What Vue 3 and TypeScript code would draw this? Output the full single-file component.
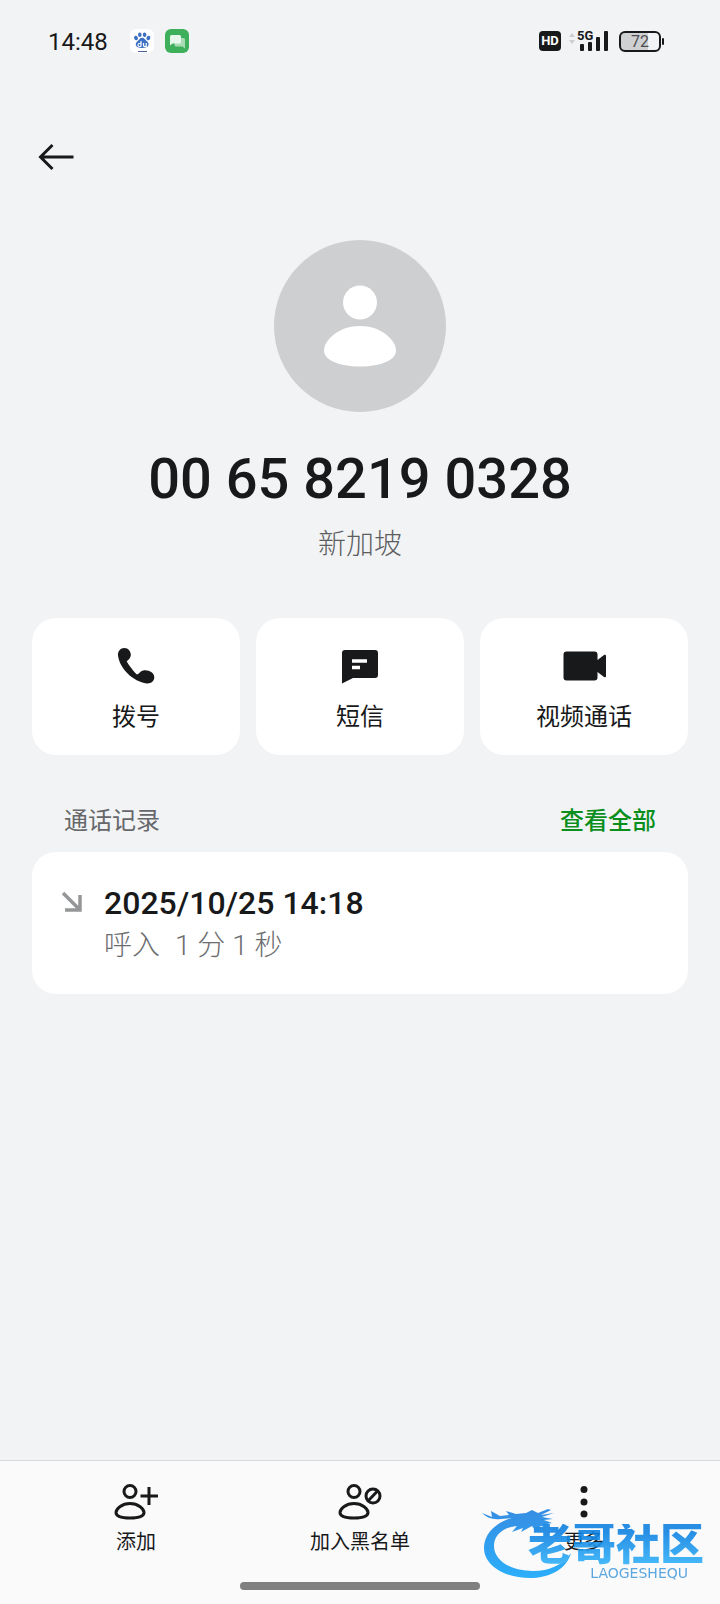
<script setup lang="ts">
interface CallEntry {
  time: string
  kind: string
  duration: string
}

const phone = '00 65 8219 0328'
const region = '新加坡'
const calls: CallEntry[] = [
  { time: '2025/10/25 14:18', kind: '呼入', duration: '1 分 1 秒' },
]
</script>

<template>
  <div class="page">
    <header class="status">
      <span class="clock">14:48</span>
      <span class="apps">
        <svg width="24" height="24" viewBox="0 0 24 24" aria-hidden="true">
          <rect width="24" height="24" rx="6" fill="#fff" />
          <g fill="#3c70c4">
            <ellipse cx="6" cy="9" rx="1.9" ry="2.3" transform="rotate(-18 6 9)" />
            <ellipse cx="9.800" cy="5.800" rx="1.800" ry="2.300" />
            <ellipse cx="14.600" cy="5.800" rx="1.800" ry="2.300" />
            <ellipse cx="18.400" cy="9" rx="1.900" ry="2.300" transform="rotate(18 18.400 9)" />
            <path d="M12.2 8.800c2.200 0 3 2 4.400 3.200 1.800 1.400 2.400 2.800 1.800 4.600-.6 1.800-2.400 2.300-6.200 2.300s-5.600-.5-6.200-2.300c-.6-1.800 0-3.200 1.800-4.600 1.400-1.200 2.200-3.200 4.400-3.200Z" />
            <rect x="8" y="22" width="9" height="1" fill="#4c6193" />
          </g>
          <g fill="none" stroke="#fff" stroke-width="1.200">
            <path d="M11 12v5.500M11 14.500H9.500a1.500 1.500 0 0 0 0 3H11M13.500 14v2.200c0 1 .5 1.400 1.400 1.400h1.300V14" />
          </g>
        </svg>
        <svg width="24" height="24" viewBox="0 0 24 24" aria-hidden="true">
          <rect width="24" height="24" rx="6" fill="#3eaf5a" />
          <path d="M11 9h7.500A1.500 1.500 0 0 1 20 10.500v9L17.500 17.500H11A1.500 1.500 0 0 1 9.500 16v-5.500A1.500 1.500 0 0 1 11 9Z" fill="#a9dcb4" />
          <path d="M6.500 6h8A1.500 1.500 0 0 1 16 7.500v5.500a1.500 1.500 0 0 1-1.500 1.500H7.500L5 16.500v-9A1.500 1.500 0 0 1 6.500 6Z" fill="#e8f7eb" />
        </svg>
      </span>
      <span class="signals">
        <span class="hd">HD</span>
        <svg width="42" height="24" viewBox="0 0 42 24" aria-label="5G">
          <path d="M1 8l3-4 3 4ZM1 11l3 4 3-4Z" fill="#cccdcf" />
          <g fill="#18191a">
            <rect x="12" y="15" width="4" height="7" rx="1" />
            <rect x="20" y="13" width="4" height="9" rx="1" />
            <rect x="28" y="8" width="4" height="14" rx="1" />
            <rect x="36" y="2" width="4" height="20" rx="1" />
            <text x="9" y="11" class="gen">5G</text>
          </g>
        </svg>
        <span class="battery">72</span>
      </span>
    </header>

    <nav class="topbar">
      <button type="button" class="back" aria-label="返回">
        <svg width="40" height="32" viewBox="0 0 40 32">
          <path d="M16.500 4 4.500 16 16.500 28M4.500 16H37.500" fill="none" stroke="#18191a" stroke-width="3" />
        </svg>
      </button>
    </nav>

    <main>
      <section class="profile">
        <div class="avatar">
          <svg width="172" height="172" viewBox="0 0 172 172" aria-hidden="true">
            <circle cx="86" cy="62.500" r="17" fill="#fff" />
            <path d="M86 86c21 0 36 14 36 24.500 0 9.500-15 16-36 16s-36-6.500-36-16C50 100 65 86 86 86Z" fill="#fff" />
          </svg>
        </div>
        <h1>{{ phone }}</h1>
        <p>{{ region }}</p>
      </section>

      <section class="actions">
        <button type="button" class="card">
          <svg width="44" height="44" viewBox="0 0 44 44" aria-hidden="true">
            <path d="M4 11.500C3.500 7.500 6.500 4 10.300 4c3.900 0 6.900 3.500 6.500 7.600-.3 2.600-2.600 4.600-4 5.600-.5.500 8.700 12.800 10.200 13.100 2 .2 2.900-3.500 6.400-3.900 5.600-.8 10.900 2.300 10.900 6.900 0 3.900-3.200 6.500-7.500 6.200C19 37.500 5.800 25 4 11.500Z" fill="#18191a" />
          </svg>
          <span>拨号</span>
        </button>
        <button type="button" class="card">
          <svg width="44" height="44" viewBox="0 0 44 44" aria-hidden="true">
            <path d="M7 6h30a3 3 0 0 1 3 3v22a3 3 0 0 1-3 3H15L4 39.500V9a3 3 0 0 1 3-3Z" fill="#18191a" />
            <path d="M14 17h15M14 23.500h8" stroke="#fff" stroke-width="3.500" />
          </svg>
          <span>短信</span>
        </button>
        <button type="button" class="card">
          <svg width="44" height="44" viewBox="0 0 44 44" aria-hidden="true">
            <path d="M4.500 7.500h28a3 3 0 0 1 3 3V16l6.500-5c1-.6 2 0 2 1v20c0 1-1 1.600-2 1l-6.500-5v5.500a3 3 0 0 1-3 3h-28a3 3 0 0 1-3-3v-23a3 3 0 0 1 3-3Z" fill="#18191a" />
          </svg>
          <span>视频通话</span>
        </button>
      </section>

      <section>
        <div class="section-head">
          <h2>通话记录</h2>
          <a href="#all">查看全部</a>
        </div>
        <ul class="log">
          <li v-for="call in calls" :key="call.time">
            <svg width="20" height="40" viewBox="0 0 20 40" aria-hidden="true">
              <path d="M1 10 17.500 26.500M18 12v15H3" fill="none" stroke="#959697" stroke-width="3.500" />
            </svg>
            <div>
              <div class="when">{{ call.time }}</div>
              <div class="detail"><span>{{ call.kind }}</span><span>{{ call.duration }}</span></div>
            </div>
          </li>
        </ul>
      </section>
    </main>

    <footer class="bottom">
      <div class="tools">
        <button type="button">
          <svg width="44" height="40" viewBox="0 0 44 40" fill="none" stroke="#18191a" stroke-width="3" aria-hidden="true">
            <circle cx="16" cy="8.500" r="6" />
            <path d="M16 20.500c8.500 0 14 5.500 14 9 0 3.500-5.500 5.500-14 5.500S2 33 2 29.500c0-3.500 5.500-9 14-9ZM26.500 13H44M35 4v18" />
          </svg>
          <span>添加</span>
        </button>
        <button type="button">
          <svg width="44" height="40" viewBox="0 0 44 40" fill="none" stroke="#18191a" stroke-width="3" aria-hidden="true">
            <circle cx="16" cy="8.500" r="6" />
            <path d="M16 20.500c8.500 0 14 5.500 14 9 0 3.500-5.500 5.500-14 5.500S2 33 2 29.500c0-3.500 5.500-9 14-9ZM30 18l10-10.500" />
            <circle cx="35" cy="13" r="7" />
          </svg>
          <span>加入黑名单</span>
        </button>
        <button type="button">
          <svg width="44" height="40" viewBox="0 0 44 40" fill="#18191a" aria-hidden="true">
            <circle cx="22" cy="6.500" r="3.500" />
            <circle cx="22" cy="19" r="3.500" />
            <circle cx="22" cy="31" r="3.500" />
          </svg>
          <span>更多</span>
        </button>
      </div>
      <div class="home"></div>

      <div class="mark">
        <svg width="100" height="78" viewBox="0 0 100 78" aria-hidden="true">
          <defs>
            <linearGradient id="dragon" x1="0" y1="0" x2="0" y2="1">
              <stop offset="0" stop-color="#1b7fe0" />
              <stop offset="1" stop-color="#0fa5fb" />
            </linearGradient>
          </defs>
          <path d="M30 14C12 19 2 31 2 44c0 18 22 31 49 30 19-1 34-10 38-25-8 12-22 18-38 18C28 67 12 56 12 42c0-9 6-16 17-19l6-1-5 6 11-4-2 4 11-6 3 4 6-4 9 3-3-5 5-1-8-3 9-1-11-2 12-4-13 2 10-5-3-1-10 4-6-3-6 3-10 1-10-3 3 4-9 1-9-5 1 6L0 9c5 5 11 7 19 6Z" fill="url(#dragon)" />
        </svg>
        <div class="mark-text">
          <strong>老哥社区</strong>
          <small>LAOGESHEQU</small>
        </div>
      </div>
    </footer>
  </div>
</template>

<style>
body {
  background: #f2f3f5;
}
</style>

<style scoped>
.page {
  min-height: 100vh;
  display: flex;
  flex-direction: column;
  background: #f2f3f5;
  color: #18191a;
  font-family: Roboto, "Noto Sans CJK SC", sans-serif;
}
button {
  border: 0;
  margin: 0;
  padding: 0;
  background: none;
  color: inherit;
  font: inherit;
}
svg {
  display: block;
}
h1, h2, p, ul {
  margin: 0;
  padding: 0;
}
.status {
  height: 82px;
  padding: 0 59px 0 48px;
  display: flex;
  align-items: center;
}
.clock {
  padding-top: 2px;
  font-size: 24px;
}
.apps {
  display: flex;
  gap: 11px;
  margin-left: 22px;
}
.signals {
  display: flex;
  align-items: center;
  margin-left: auto;
}
.hd {
  width: 22px;
  margin-right: 7px;
  border-radius: 4px;
  background: #18191a;
  color: #fff;
  font-size: 13px;
  line-height: 20px;
  font-weight: 700;
  text-align: center;
}
.gen {
  font-size: 13px;
  font-weight: 700;
  stroke: #f2f3f5;
  stroke-width: 2px;
  paint-order: stroke;
}
.battery {
  position: relative;
  box-sizing: border-box;
  width: 42px;
  margin-left: 9px;
  border: 2px solid #18191a;
  border-radius: 6px;
  background: linear-gradient(90deg, #cfd0d2 72%, #f2f3f5 72%);
  color: #4c4d4f;
  font-size: 16px;
  line-height: 17px;
  text-align: center;
}
.battery::after {
  content: "";
  position: absolute;
  right: -5px;
  top: 5px;
  width: 2px;
  height: 7px;
  border-radius: 1px;
  background: #18191a;
}
.topbar {
  height: 150px;
  padding: 0 36px;
  display: flex;
  align-items: center;
}
.profile {
  padding-top: 8px;
  display: flex;
  flex-direction: column;
  align-items: center;
}
.avatar {
  border-radius: 50%;
  background: #cecfd1;
}
h1 {
  margin-top: 35px;
  font-size: 56px;
  line-height: 64px;
  font-weight: 500;
}
.profile p {
  margin-top: 18px;
  font-size: 28px;
  line-height: 32px;
  font-weight: 300;
  color: #5c5d60;
}
.actions {
  display: grid;
  grid-template-columns: repeat(3, 1fr);
  gap: 16px;
  margin: 57px 32px 0;
}
.card {
  padding: 26px 0 22px;
  display: flex;
  flex-direction: column;
  align-items: center;
  gap: 13px;
  border-radius: 24px;
  background: #fff;
  font-size: 24px;
  line-height: 32px;
}
.section-head {
  display: flex;
  justify-content: space-between;
  padding: 50px 64px 15px;
  font-size: 24px;
  line-height: 32px;
}
h2 {
  font-size: 24px;
  font-weight: 400;
  color: #66676a;
}
a {
  color: #0a8f1c;
  font-weight: 500;
  text-decoration: none;
}
.log {
  margin: 0 32px;
  border-radius: 24px;
  background: #fff;
  list-style: none;
}
.log li {
  display: flex;
  gap: 22px;
  padding: 31px 30px 27px;
}
.when {
  font-size: 32px;
  line-height: 40px;
  font-weight: 500;
}
.detail {
  display: flex;
  gap: 15px;
  margin-top: 2px;
  font-size: 28px;
  line-height: 42px;
  font-weight: 300;
  color: #6c6d6f;
}
.bottom {
  position: relative;
  margin-top: auto;
  padding-bottom: 14px;
  border-top: 1px solid #d8d9da;
  background: #fafafa;
}
.tools {
  display: grid;
  grid-template-columns: repeat(3, 1fr);
  gap: 16px;
  padding: 22px 32px 0;
}
.tools button {
  display: flex;
  flex-direction: column;
  align-items: center;
  gap: 7px;
  font-size: 20px;
  line-height: 24px;
}
.home {
  width: 33.333%;
  height: 8px;
  margin: 28px auto 0;
  border-radius: 4px;
  background: #808080;
}
.mark {
  position: absolute;
  right: 16px;
  bottom: 22px;
  width: 222px;
  height: 78px;
  opacity: 0.88;
  pointer-events: none;
}
.mark-text {
  position: absolute;
  top: 20px;
  right: 0;
  display: flex;
  flex-direction: column;
  align-items: flex-end;
}
.mark strong {
  font-size: 44px;
  line-height: 42px;
  font-weight: 900;
  background: linear-gradient(#0b80e2 20%, #2fb2fa);
  background-clip: text;
  color: transparent;
}
.mark small {
  margin-right: 16px;
  font-family: "DejaVu Sans", sans-serif;
  font-size: 14px;
  line-height: 14px;
  color: #459bdc;
}
</style>
